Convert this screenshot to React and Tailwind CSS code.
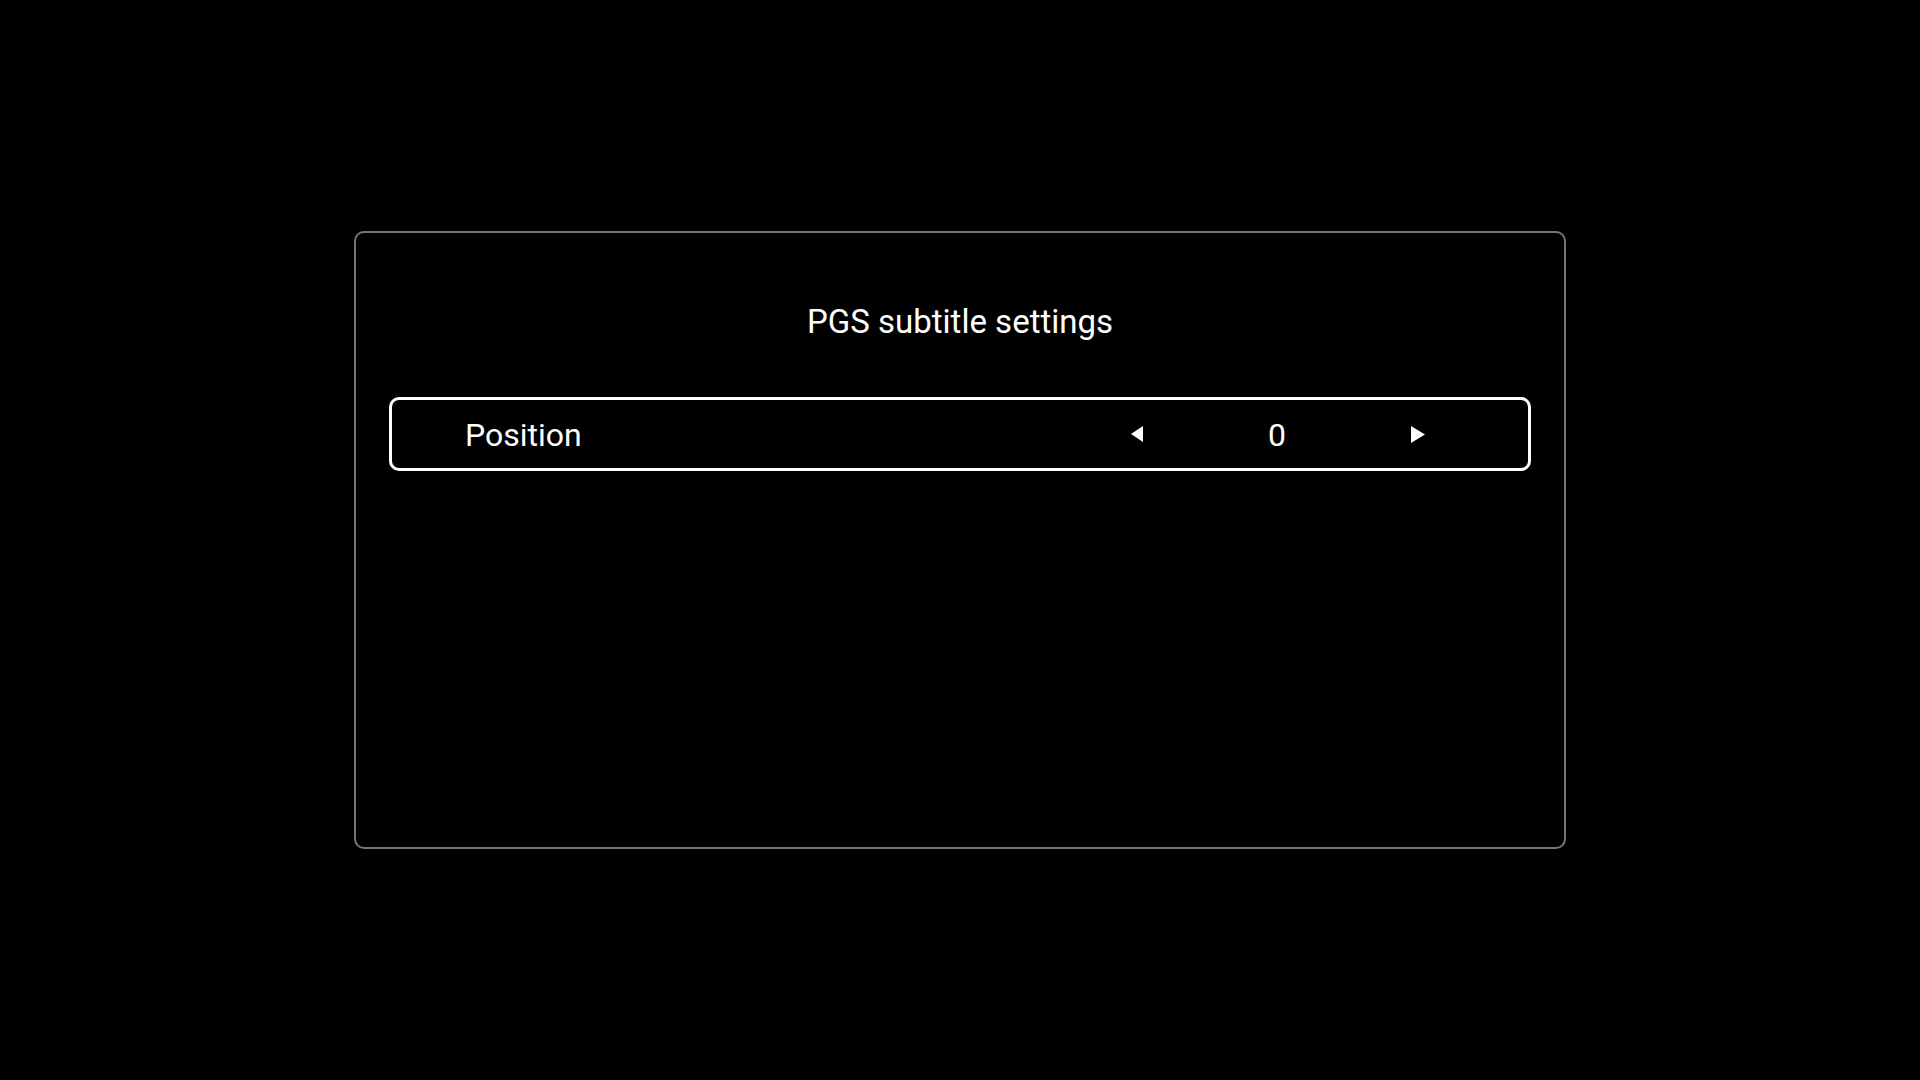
export default function App() {
  return (
    <div
      className="w-screen h-screen bg-black flex items-center justify-center"
      style={{ fontFamily: 'Roboto, "Liberation Sans", sans-serif' }}
    >
      <div className="w-[1212px] h-[618px] border-2 border-[#767676] rounded-[10px] flex flex-col px-[33px] pt-[69px]">
        <div className="text-white text-[33px] leading-[40px] text-center">PGS subtitle settings</div>
        <div className="mt-[55px] h-[74px] border-[3px] border-white rounded-[10px] flex items-center pl-[73px] pr-[103px]">
          <div className="flex-1 text-white text-[32px] leading-[40px] pt-[2px]">Position</div>
          <div className="w-[294px] flex items-center justify-between">
            <svg width="12" height="16" viewBox="0 0 12 16" className="block">
              <polygon points="12,0 12,16 0,8" fill="white" />
            </svg>
            <div className="text-white text-[32px] leading-[40px] pt-[2px]">0</div>
            <svg width="14" height="17" viewBox="0 0 14 17" className="block">
              <polygon points="0,0 0,17 14,8.5" fill="white" />
            </svg>
          </div>
        </div>
      </div>
    </div>
  );
}
